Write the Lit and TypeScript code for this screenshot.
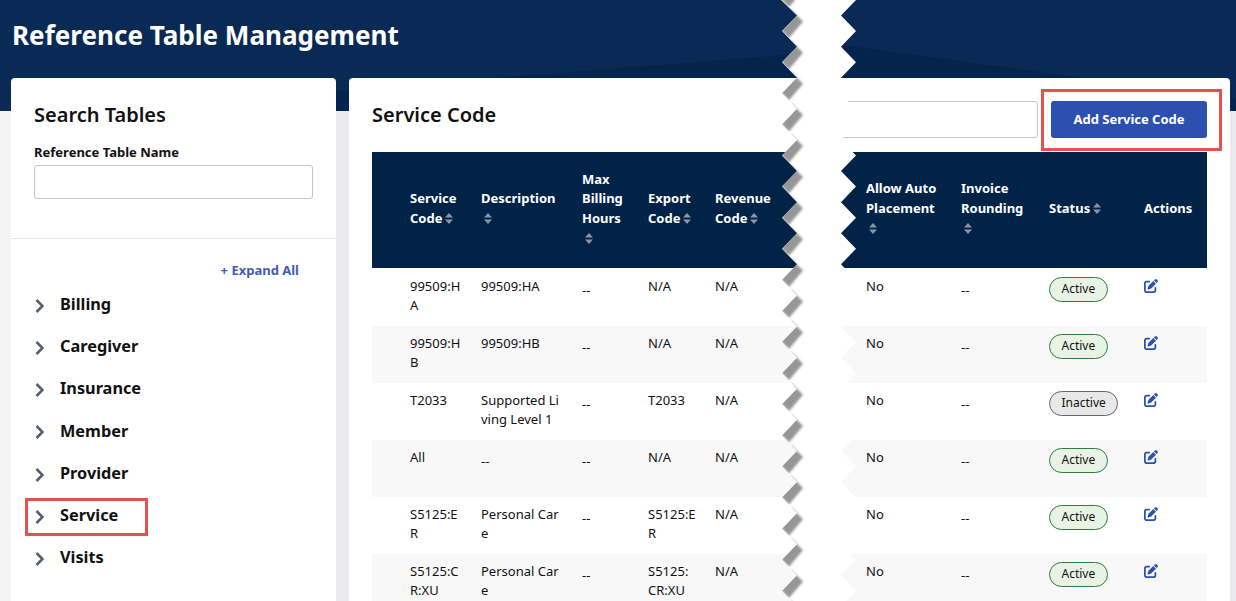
import { LitElement, html, css, svg } from "lit";
import { customElement } from "lit/decorators.js";

type Row = { code: string; desc: string; exp: string; status: "Active" | "Inactive" };
const rows: Row[] = [
  { code: "99509:HA", desc: "99509:HA", exp: "N/A", status: "Active" },
  { code: "99509:HB", desc: "99509:HB", exp: "N/A", status: "Active" },
  { code: "T2033", desc: "Supported Living Level 1", exp: "T2033", status: "Inactive" },
  { code: "All", desc: "--", exp: "N/A", status: "Active" },
  { code: "S5125:ER", desc: "Personal Care", exp: "S5125:ER", status: "Active" },
  { code: "S5125:CR:XU", desc: "Personal Care", exp: "S5125:CR:XU", status: "Active" },
];
const tree = ["Billing", "Caregiver", "Insurance", "Member", "Provider", "Service", "Visits"];
const P = 31.1;

@customElement("app-root")
export class AppRoot extends LitElement {
  static styles = css`
    :host { display: block; position: relative; width: 1236px; height: 601px; overflow: hidden; background: linear-gradient(to right, #f3f3f5 11px, #e9e9ee 11px); font-family: "Noto Sans", sans-serif; color: #111; font-size: 13px; line-height: 19.5px; }
    .banner { position: relative; height: 111px; background: #082a54; padding: 15px 0 0 12px; box-sizing: border-box; overflow: hidden; }
    .banner::before { content: ""; position: absolute; inset: 0; background: #03244d; clip-path: polygon(0 117.4px, 805px 53.4px, 805px 40px, 1236px 98.7px, 1236px 111px, 0 111px); }
    h1 { position: relative; margin: 0; color: #fff; font-size: 26.07px; line-height: 40px; font-weight: 700; }
    .main { display: flex; gap: 13px; margin-top: -33px; padding: 0 6px 0 11px; position: relative; }
    .card { background: #fff; border-radius: 4px 4px 0 0; height: 540px; }
    .side { width: 325px; flex: none; }
    .content { flex: 1; min-width: 0; padding: 23px 23px 0; box-sizing: border-box; }
    .search { padding: 23px 23px 39px; border-bottom: 1px solid #e6e6e6; }
    h2 { margin: 0; font-size: 20px; line-height: 28px; font-weight: 600; color: #111; }
    label { display: block; margin-top: 13px; font-weight: 700; font-size: 13px; line-height: 20px; }
    .field { display: block; box-sizing: border-box; border: 1px solid #c6c6c6; border-radius: 3px; background: #fff; height: 34px; width: 279px; margin-top: 3px; }
    .expand { text-align: right; padding: 22px 37px 0 0; font-weight: 700; color: #3f5cb3; height: 22.7px; }
    .tree { padding: 0 23px; }
    .node { display: flex; align-items: center; height: 42.2px; gap: 16px; font-size: 16.3px; font-weight: 700; color: #111; position: relative; width: max-content; padding-left: 1px; }
    .node svg { width: 9px; height: 14px; margin-top: 2px; }
    .mark { position: absolute; border: 3px solid #e8504a; box-sizing: border-box; pointer-events: none; }
    .mark.svc { left: -9px; width: 123px; top: 3px; height: 38px; }
    .head { display: flex; align-items: flex-start; margin-bottom: 14px; height: 37px; }
    .head h2 { flex: 1; }
    .head .field { width: 238px; height: 37px; margin: 0 13px 0 0; }
    .btn-wrap { position: relative; }
    button { display: block; width: 156px; height: 37px; border: 0; border-radius: 3px; background: #2c50b0; color: #fff; font: 700 13px/19.5px "Noto Sans", sans-serif; padding: 0; }
    .mark.add { left: -10px; right: -15px; top: -12px; bottom: -13px; }
    table { table-layout: fixed; width: 835px; border-collapse: separate; border-spacing: 0; }
    th { background: #002347; color: #fff; font-weight: 700; text-align: left; vertical-align: middle; height: 117px; padding: 0 10px 2.6px; box-sizing: border-box; border-bottom: 1px solid #fff; }
    td { vertical-align: top; height: 57px; padding: 8px 10px 0; box-sizing: border-box; word-break: break-all; line-height: 19px; }
    th:first-child, td:first-child { padding-left: 38px; }
    td.exp { padding-right: 8.5px; }
    tr.alt td { background: #f8f8f8; }
    td.dash { padding-top: 12px; }
    .sort { display: inline-block; width: 8px; height: 11px; margin-left: 3px; vertical-align: -1.5px; }
    .pill { display: inline-block; box-sizing: border-box; height: 25px; line-height: 22px; padding: 0 11.5px; border-radius: 13px; font-size: 12px; }
    .pill.Active { background: #e8f3e6; border: 1px solid #2e7d3c; }
    .pill.Inactive { background: #e8e8e8; border: 1px solid #666; }
    .edit { display: block; width: 14px; height: 14px; margin-top: 2px; fill: #2c50b0; }
    .tear { position: absolute; left: 770px; top: 0; width: 100px; height: 601px; }
  `;

  private sortIcon() {
    return html`<svg class="sort" viewBox="0 0 8 11"><path fill="#8a95a6" d="M4 0 8 4.500H0zM0 6.500h8L4 11z"/></svg>`;
  }

  private tear() {
    const left: string[] = [];
    const right: string[] = [];
    const shadows: string[] = [];
    for (let k = 0; k <= 20; k++) {
      const Y = k * P;
      left.push(`${k === 0 ? 781 : 782},${Y}`, `797,${Y + P / 2}`);
      right.push(`856,${Y}`, `841,${Y + P / 2}`);
      shadows.push(`776,${Y - 6} 791,${Y - 21.5} 803,${Y - 9.5} 789,${Y + 7}`);
    }
    const strip = [...left, ...right.reverse()].join(" ");
    return html`<svg class="tear" viewBox="770 0 100 601">
      ${svg`<defs>
        <filter id="soft" x="-20%" y="-20%" width="140%" height="140%"><feGaussianBlur stdDeviation="0.9"/></filter>
        <clipPath id="stripClip"><polygon points=${strip}/></clipPath>
      </defs>
      <polygon points=${strip} fill="#fff"/>
      <g clip-path="url(#stripClip)"><g filter="url(#soft)">
        ${shadows.map((p) => svg`<polygon points=${p} fill="#969696"/>`)}
      </g></g>`}
    </svg>`;
  }

  render() {
    return html`
      <div class="banner"><h1>Reference Table Management</h1></div>
      <div class="main">
        <aside class="card side">
          <div class="search">
            <h2>Search Tables</h2>
            <label>Reference Table Name</label>
            <div class="field"></div>
          </div>
          <div class="expand">+ Expand All</div>
          <div class="tree">
            ${tree.map((t) => html`<div class="node">
              <svg viewBox="0 0 9 14"><path d="M1.5 1 7.500 7 1.500 13" fill="none" stroke="#565f6e" stroke-width="2.600"/></svg>
              <span>${t}</span>
              ${t === "Service" ? html`<span class="mark svc"></span>` : ""}
            </div>`)}
          </div>
        </aside>
        <section class="card content">
          <div class="head">
            <h2>Service Code</h2>
            <div class="field"></div>
            <div class="btn-wrap"><button>Add Service Code</button><span class="mark add"></span></div>
          </div>
          <table>
            <colgroup>
              <col style="width:99px"/><col style="width:101px"/><col style="width:66px"/><col style="width:67px"/><col style="width:75px"/><col style="width:76px"/><col style="width:95px"/><col style="width:88px"/><col style="width:95px"/><col style="width:73px"/>
            </colgroup>
            <thead><tr>
              <th>Service Code${this.sortIcon()}</th>
              <th>Description${this.sortIcon()}</th>
              <th>Max Billing Hours${this.sortIcon()}</th>
              <th>Export Code${this.sortIcon()}</th>
              <th>Revenue Code${this.sortIcon()}</th>
              <th></th>
              <th>Allow Auto Placement${this.sortIcon()}</th>
              <th>Invoice Rounding${this.sortIcon()}</th>
              <th>Status${this.sortIcon()}</th>
              <th>Actions</th>
            </tr></thead>
            <tbody>
              ${rows.map((r, i) => html`<tr class=${i % 2 ? "alt" : ""}>
                <td>${r.code}</td>
                <td class=${r.desc === "--" ? "dash" : ""}>${r.desc}</td>
                <td class="dash">--</td>
                <td class="exp">${r.exp}</td>
                <td>N/A</td>
                <td></td>
                <td>No</td>
                <td class="dash">--</td>
                <td><span class="pill ${r.status}">${r.status}</span></td>
                <td><svg class="edit" viewBox="0 0 512 512"><path d="M471.6 21.7c-21.900-21.900-57.300-21.900-79.200 0L362.300 51.700l97.900 97.900 30.100-30.100c21.900-21.900 21.900-57.300 0-79.200L471.600 21.700zm-299.200 220c-6.100 6.100-10.800 13.600-13.500 21.900l-29.600 88.800c-2.900 8.600-.6 18.100 5.800 24.600s15.900 8.700 24.600 5.800l88.800-29.600c8.200-2.700 15.700-7.400 21.900-13.500L437.700 172.300 339.700 74.300 172.400 241.700zM96 64C43 64 0 107 0 160V416c0 53 43 96 96 96H352c53 0 96-43 96-96V320c0-17.700-14.300-32-32-32s-32 14.300-32 32v96c0 17.700-14.300 32-32 32H96c-17.700 0-32-14.300-32-32V160c0-17.700 14.300-32 32-32h96c17.700 0 32-14.300 32-32s-14.300-32-32-32H96z"/></svg></td>
              </tr>`)}
            </tbody>
          </table>
        </section>
      </div>
      ${this.tear()}
    `;
  }
}
